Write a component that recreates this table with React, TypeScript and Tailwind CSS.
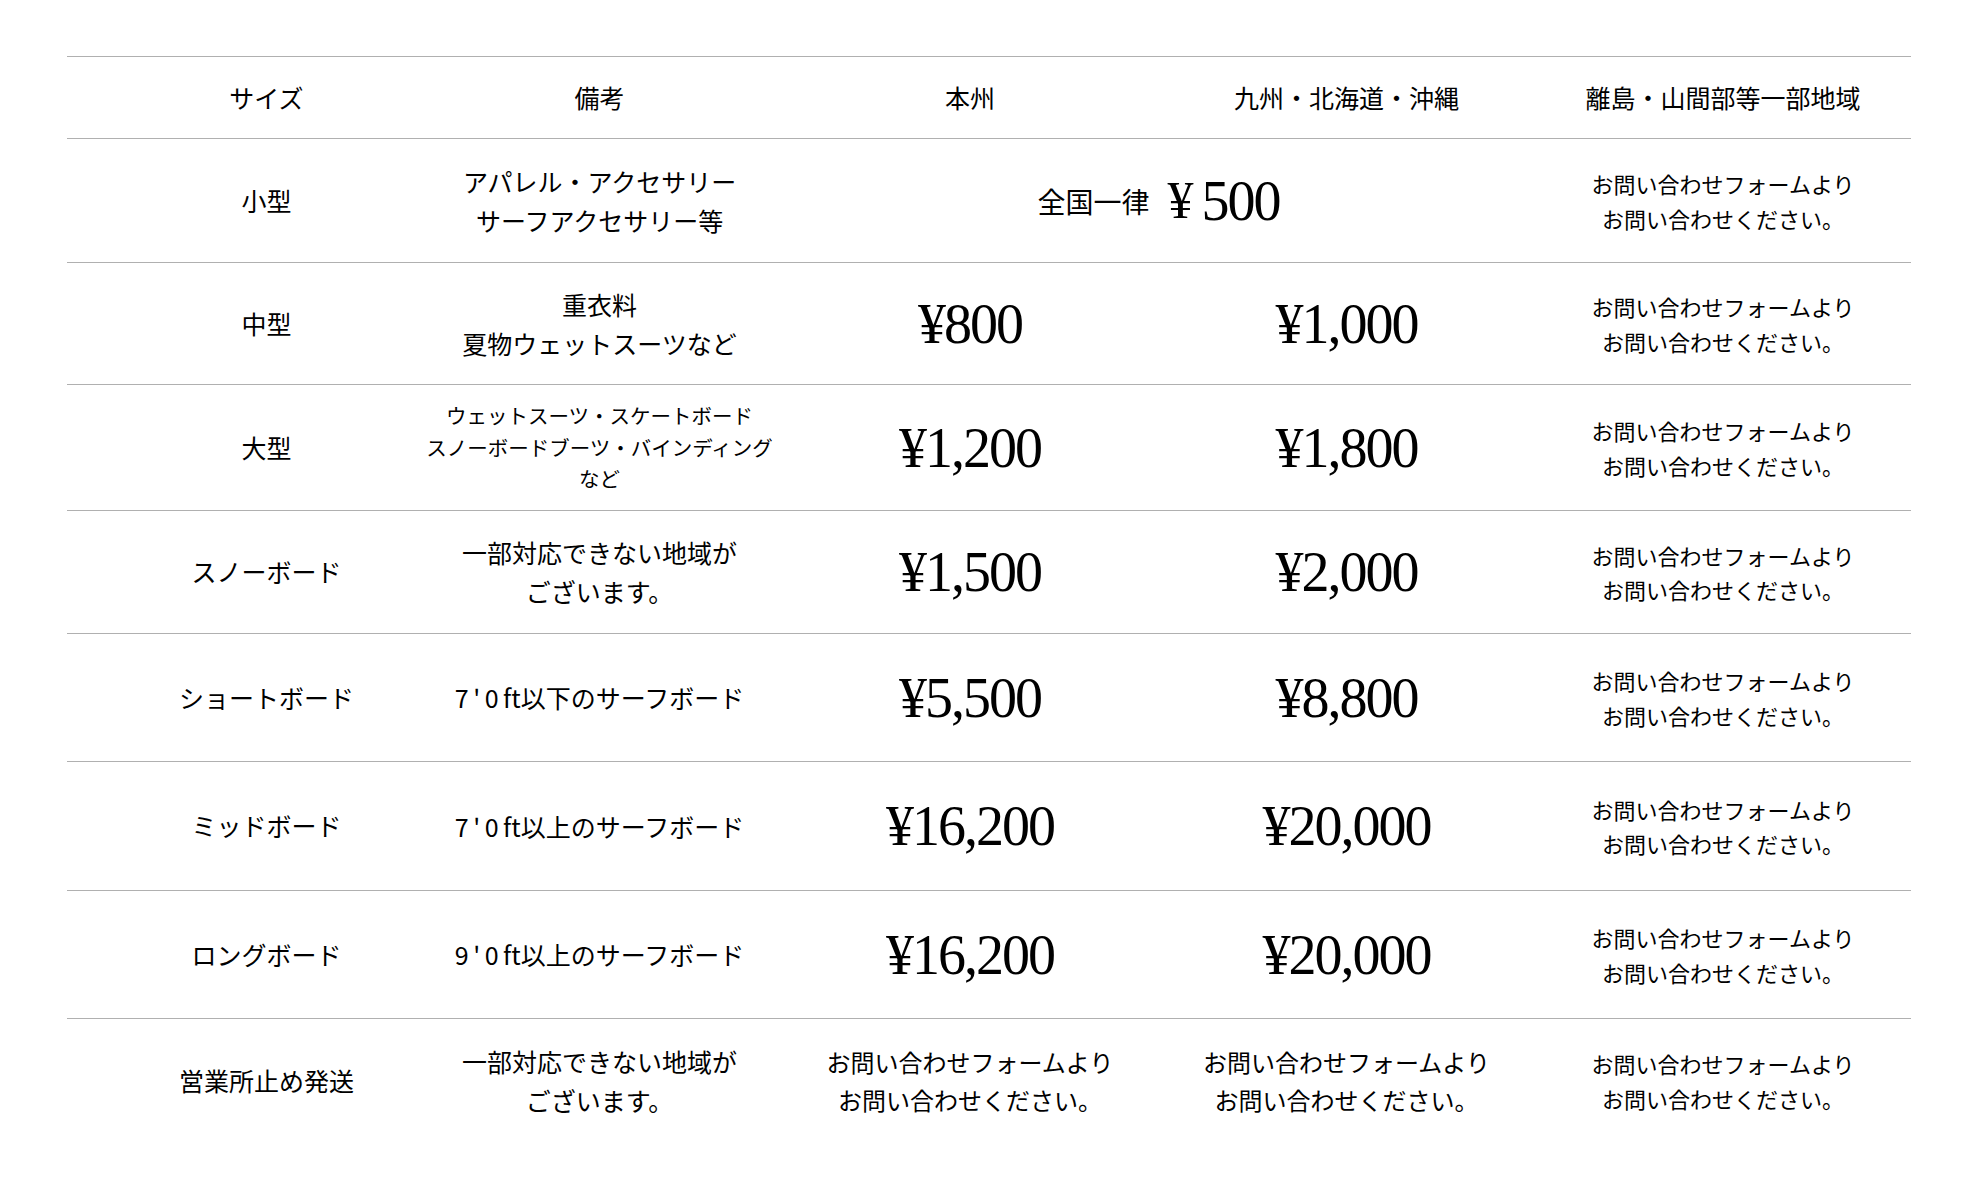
import React from 'react';

type Row = {
    size: string;
    note: React.ReactNode;
    noteSmall?: boolean;
    honshu?: string;
    kyushu?: string;
    flat?: boolean;
    officeOnly?: boolean;
    height: string;
};

const ft = (lead: string, rest: string) => (
    <span>
        <span className="tracking-[0.18em]">{lead}</span>
        <span>ft{rest}</span>
    </span>
);

const rows: Row[] = [
    { size: '小型', note: <>アパレル・アクセサリー<br />サーフアクセサリー等</>, flat: true, height: 'h-[124px]' },
    { size: '中型', note: <>重衣料<br />夏物ウェットスーツなど</>, honshu: '¥800', kyushu: '¥1,000', height: 'h-[122px]' },
    {
        size: '大型',
        note: <>ウェットスーツ・スケートボード<br />スノーボードブーツ・バインディング<br />など</>,
        noteSmall: true,
        honshu: '¥1,200',
        kyushu: '¥1,800',
        height: 'h-[126px]',
    },
    { size: 'スノーボード', note: <>一部対応できない地域が<br />ございます。</>, honshu: '¥1,500', kyushu: '¥2,000', height: 'h-[123px]' },
    { size: 'ショートボード', note: ft("7'0", '以下のサーフボード'), honshu: '¥5,500', kyushu: '¥8,800', height: 'h-[128px]' },
    { size: 'ミッドボード', note: ft("7'0", '以上のサーフボード'), honshu: '¥16,200', kyushu: '¥20,000', height: 'h-[129px]' },
    { size: 'ロングボード', note: ft("9'0", '以上のサーフボード'), honshu: '¥16,200', kyushu: '¥20,000', height: 'h-[128px]' },
    { size: '営業所止め発送', note: <>一部対応できない地域が<br />ございます。</>, officeOnly: true, height: 'h-[124px]' },
];

const grid = 'grid grid-cols-[399px_267px_474px_279px_425px] border-t border-[#b0b0b0]';
const cell = 'flex items-center justify-center text-center whitespace-nowrap';

function Contact({ big }: { big?: boolean }) {
    return (
        <p className={big ? 'text-[24px] leading-[1.55]' : 'text-[22px] leading-[1.55]'}>
            お問い合わせフォームより<br />お問い合わせください。
        </p>
    );
}

function Price({ value }: { value: string }) {
    return (
        <span className="font-['Liberation_Serif',serif] text-[56px] leading-none tracking-[-2px]">{value}</span>
    );
}

export default function App() {
    return (
        <div className="min-h-screen bg-white pl-[67px] pt-[56px] text-black font-['Noto_Sans_CJK_JP',sans-serif]">
            <div className="w-[1844px]">
                {/* Header */}
                <div className={`${grid} h-[82px] text-[25px]`}>
                    <div className={cell}>サイズ</div>
                    <div className={cell}>備考</div>
                    <div className={cell}>本州</div>
                    <div className={cell}>九州・北海道・沖縄</div>
                    <div className={`${cell} pl-[49px]`}>離島・山間部等一部地域</div>
                </div>

                {rows.map((r) => (
                    <div key={r.size} className={`${grid} ${r.height}`}>
                        <div className={`${cell} text-[25px]`}>{r.size}</div>
                        <div className={cell}>
                            <p className={r.noteSmall ? 'text-[20.5px] leading-[1.55]' : 'text-[25px] leading-[1.56]'}>
                                {r.note}
                            </p>
                        </div>
                        {r.flat ? (
                            <div className={`${cell} col-span-2 pl-[98px]`}>
                                <span className="text-[28px]">全国一律</span>
                                <span className="ml-[18px] font-['Liberation_Serif',serif] text-[52px] leading-none">¥</span>
                                <span className="ml-[8px] font-['Liberation_Serif',serif] text-[56px] leading-none tracking-[-2px]">500</span>
                            </div>
                        ) : r.officeOnly ? (
                            <>
                                <div className={cell}><Contact big /></div>
                                <div className={cell}><Contact big /></div>
                            </>
                        ) : (
                            <>
                                <div className={cell}><Price value={r.honshu!} /></div>
                                <div className={cell}><Price value={r.kyushu!} /></div>
                            </>
                        )}
                        <div className={`${cell} pl-[49px]`}><Contact /></div>
                    </div>
                ))}
            </div>
        </div>
    );
}
